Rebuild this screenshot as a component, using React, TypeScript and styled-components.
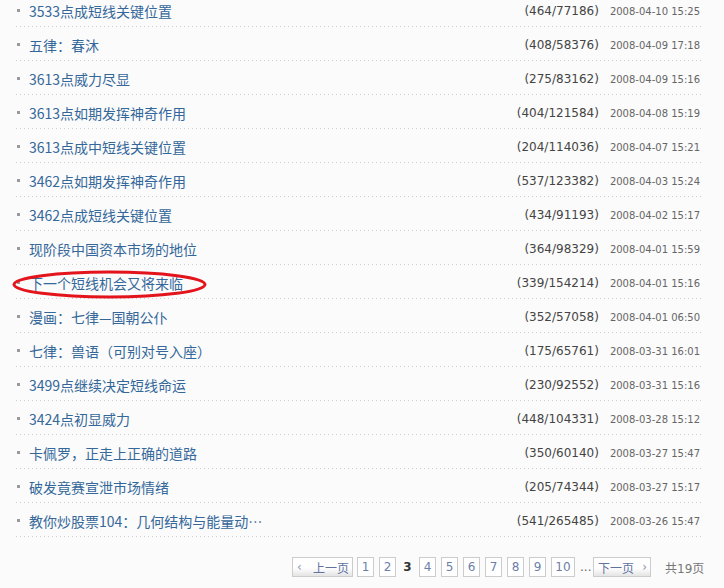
import React from "react";
import styled, { createGlobalStyle } from "styled-components";

const Global = createGlobalStyle`
  html, body { margin: 0; padding: 0; background: #fbfbfb; }
  body { width: 724px; height: 588px; overflow: hidden; }
`;

const Page = styled.div`
  width: 724px;
  height: 588px;
  overflow: hidden;
  background: #fbfbfb;
`;

const List = styled.ul`
  list-style: none;
  margin: -7px 0 0 0;
  padding: 0 22px 0 16px;
`;

const Row = styled.li`
  position: relative;
  display: flex;
  align-items: center;
  height: 18px;
  padding: 9px 0 7px 0;
  background-image: linear-gradient(to right, #cfcfcf 1px, transparent 1px);
  background-size: 4px 1px;
  background-repeat: repeat-x;
  background-position: left bottom;
`;

const Bullet = styled.span`
  width: 3px;
  height: 3px;
  background: #9a9a9a;
  margin: -2px 9px 0 1px;
  flex: none;
`;

const Title = styled.a`
  flex: 1;
  font-family: "Noto Sans CJK SC", "Noto Sans", sans-serif;
  font-size: 14px;
  line-height: 18px;
  color: #34679a;
  text-decoration: none;
  white-space: nowrap;
`;

const Count = styled.span`
  font-family: "DejaVu Sans", Verdana, sans-serif;
  font-size: 12px;
  color: #444;
  white-space: nowrap;
`;

const DateText = styled.span`
  font-family: "DejaVu Sans", Verdana, sans-serif;
  font-size: 10px;
  color: #666;
  margin-left: 11px;
  margin-right: 2px;
  white-space: nowrap;
`;

const Ellipse = styled.svg`
  position: absolute;
  left: -4px;
  top: 5px;
  width: 195px;
  height: 29px;
  pointer-events: none;
  overflow: visible;
`;

const Pager = styled.div`
  display: flex;
  align-items: center;
  margin-top: 20px;
  padding-left: 292px;
  height: 20px;
  font-family: "DejaVu Sans", Verdana, sans-serif;
  font-size: 12px;
`;

const PageBox = styled.span<{ $wide?: boolean }>`
  box-sizing: border-box;
  display: flex;
  align-items: center;
  justify-content: center;
  width: ${(p) => (p.$wide ? "24px" : "17px")};
  height: 20px;
  border: 1px solid #ccc;
  background: #fff;
  color: #6b80aa;
  margin-right: 5px;
`;

const NavBox = styled.span<{ $w: number }>`
  box-sizing: border-box;
  display: flex;
  align-items: center;
  justify-content: space-between;
  width: ${(p) => p.$w}px;
  height: 20px;
  padding: 0 3px 0 4px;
  border: 1px solid #ccc;
  background: linear-gradient(to bottom, #ffffff 0%, #ffffff 55%, #e4e4e4 100%);
  color: #60729e;
  font-family: "Noto Sans CJK SC", sans-serif;
  font-size: 12px;
  margin-right: 4px;
`;

const Chevron = styled.span`
  font-family: "DejaVu Sans", sans-serif;
  font-size: 12px;
  color: #8a96b4;
`;

const Current = styled.span`
  width: 13px;
  text-align: center;
  color: #333;
  font-weight: bold;
  margin-right: 5px;
`;

const Dots = styled.span`
  color: #666;
  width: 11px;
  margin-right: 2px;
  text-align: center;
`;

const Total = styled.span`
  font-family: "Noto Sans CJK SC", sans-serif;
  color: #777;
  margin-left: 10px;
  font-size: 12px;
`;

const TotalNum = styled.span`
  font-family: "DejaVu Sans", sans-serif;
`;

type Item = { t: string; c: string; d: string; mark?: boolean };

const items: Item[] = [
  { t: "3533点成短线关键位置", c: "(464/77186)", d: "2008-04-10 15:25" },
  { t: "五律：春沐", c: "(408/58376)", d: "2008-04-09 17:18" },
  { t: "3613点威力尽显", c: "(275/83162)", d: "2008-04-09 15:16" },
  { t: "3613点如期发挥神奇作用", c: "(404/121584)", d: "2008-04-08 15:19" },
  { t: "3613点成中短线关键位置", c: "(204/114036)", d: "2008-04-07 15:21" },
  { t: "3462点如期发挥神奇作用", c: "(537/123382)", d: "2008-04-03 15:24" },
  { t: "3462点成短线关键位置", c: "(434/91193)", d: "2008-04-02 15:17" },
  { t: "现阶段中国资本市场的地位", c: "(364/98329)", d: "2008-04-01 15:59" },
  { t: "下一个短线机会又将来临", c: "(339/154214)", d: "2008-04-01 15:16", mark: true },
  { t: "漫画：七律—国朝公仆", c: "(352/57058)", d: "2008-04-01 06:50" },
  { t: "七律：兽语（可别对号入座）", c: "(175/65761)", d: "2008-03-31 16:01" },
  { t: "3499点继续决定短线命运", c: "(230/92552)", d: "2008-03-31 15:16" },
  { t: "3424点初显威力", c: "(448/104331)", d: "2008-03-28 15:12" },
  { t: "卡佩罗，正走上正确的道路", c: "(350/60140)", d: "2008-03-27 15:47" },
  { t: "破发竟赛宣泄市场情绪", c: "(205/74344)", d: "2008-03-27 15:17" },
  { t: "教你炒股票104：几何结构与能量动…", c: "(541/265485)", d: "2008-03-26 15:47" },
];

export default function App() {
  return (
    <Page>
      <Global />
      <List>
        {items.map((it, i) => (
          <Row key={i}>
            <Bullet />
            <Title>{it.t}</Title>
            <Count>{it.c}</Count>
            <DateText>{it.d}</DateText>
            {it.mark && (
              <Ellipse viewBox="0 0 195 29">
                <ellipse cx="97.5" cy="14.5" rx="95.5" ry="12.5" fill="none" stroke="#e3141b" strokeWidth="3" />
              </Ellipse>
            )}
          </Row>
        ))}
      </List>
      <Pager>
        <NavBox $w={61}>
          <Chevron>‹</Chevron>
          <span>上一页</span>
        </NavBox>
        <PageBox>1</PageBox>
        <PageBox>2</PageBox>
        <Current>3</Current>
        <PageBox>4</PageBox>
        <PageBox>5</PageBox>
        <PageBox>6</PageBox>
        <PageBox>7</PageBox>
        <PageBox>8</PageBox>
        <PageBox>9</PageBox>
        <PageBox $wide>10</PageBox>
        <Dots>...</Dots>
        <NavBox $w={58}>
          <span>下一页</span>
          <Chevron>›</Chevron>
        </NavBox>
        <Total>
          共<TotalNum>19</TotalNum>页
        </Total>
      </Pager>
    </Page>
  );
}
